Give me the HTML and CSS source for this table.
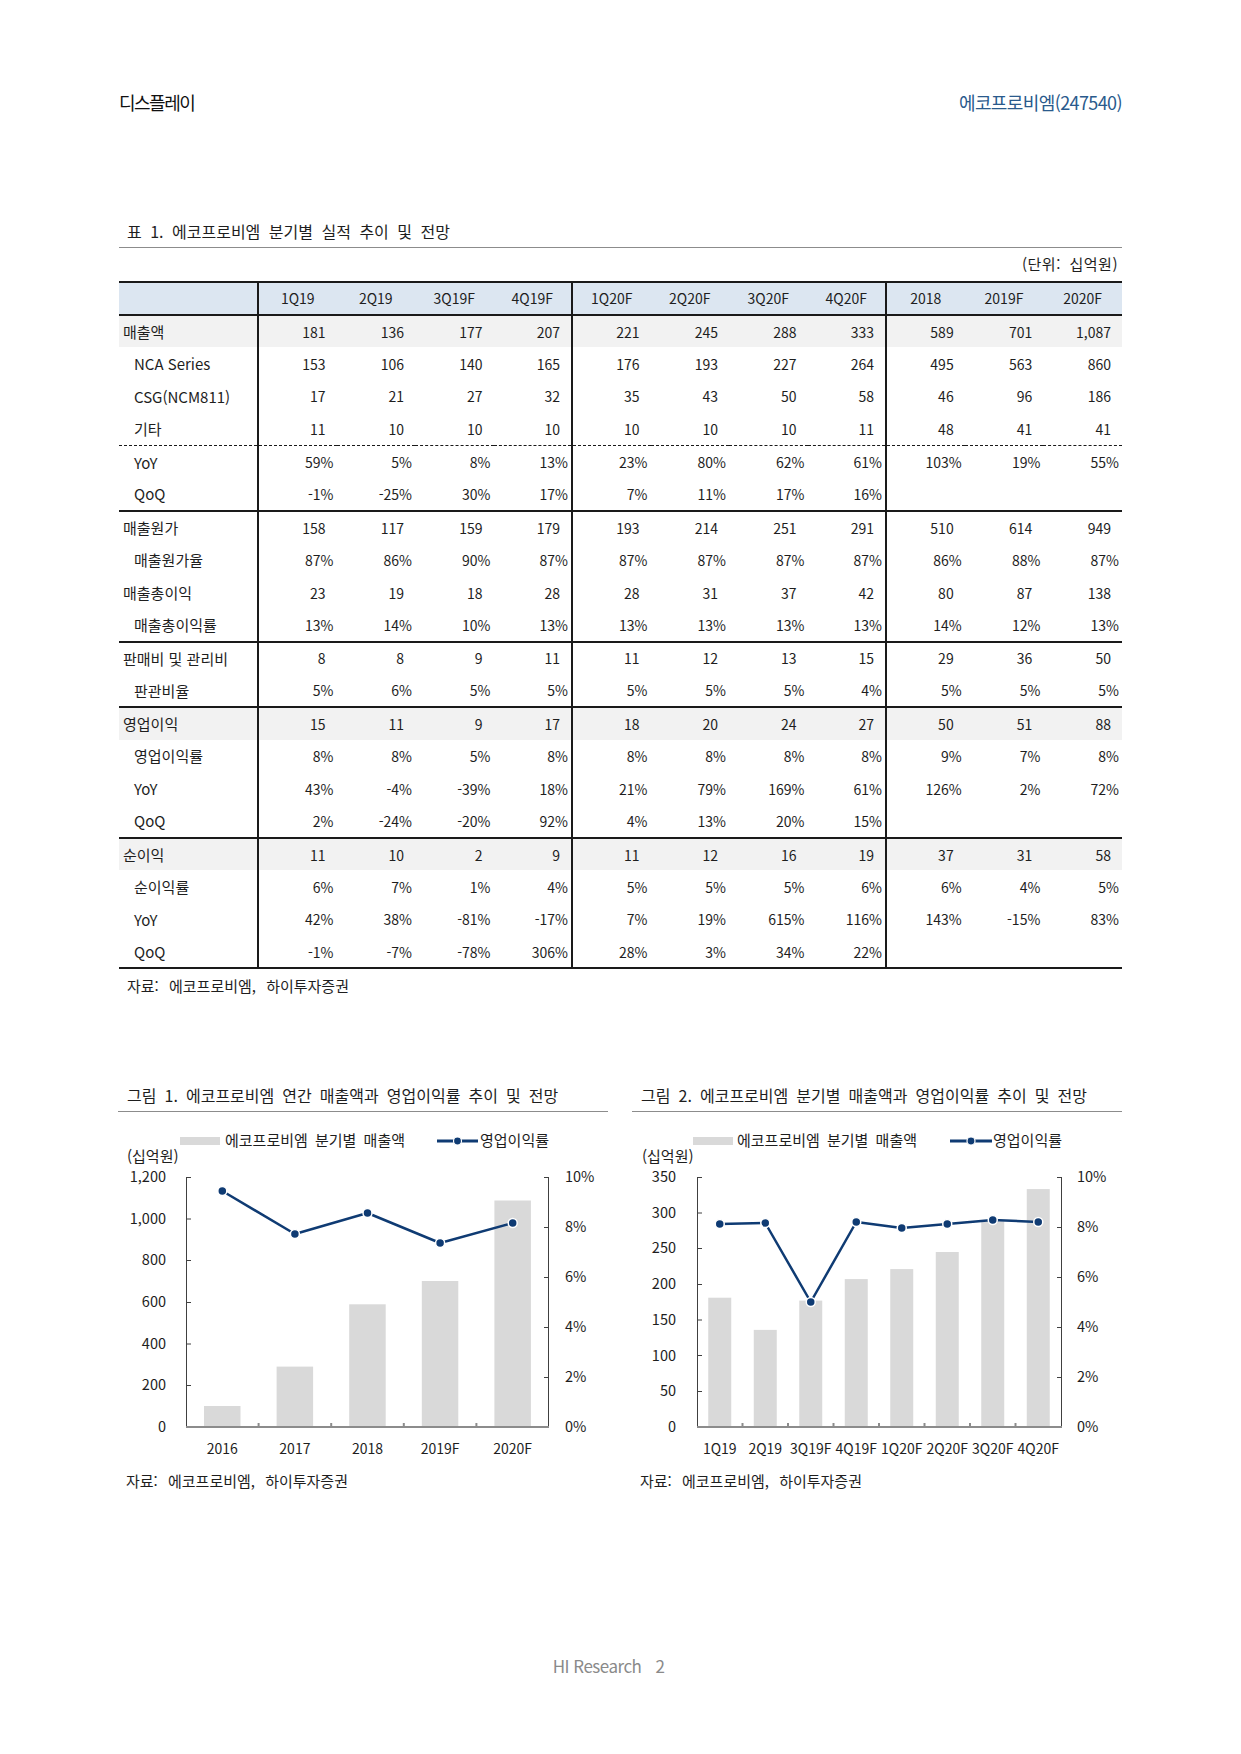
FILE: index.html
```html
<!DOCTYPE html>
<html lang="ko">
<head>
<meta charset="utf-8">
<title>에코프로비엠</title>
<link rel="stylesheet" href="styles.css">
</head>
<body>
<div class="page">
  <header class="top">
    <span class="sector">디스플레이</span>
    <span class="company">에코프로비엠(247540)</span>
  </header>

  <section class="tbl-block">
    <div class="caption">표 1. 에코프로비엠 분기별 실적 추이 및 전망</div>
    <div class="unit">(단위: 십억원)</div>
    <table class="data">
      <colgroup>
        <col class="c-label">
        <col class="c-q"><col class="c-q"><col class="c-q"><col class="c-q">
        <col class="c-q"><col class="c-q"><col class="c-q"><col class="c-q">
        <col class="c-y"><col class="c-y"><col class="c-y">
      </colgroup>
      <thead>
        <tr class="head">
          <th></th>
          <th>1Q19</th><th>2Q19</th><th>3Q19F</th><th class="sep">4Q19F</th>
          <th>1Q20F</th><th>2Q20F</th><th>3Q20F</th><th class="sep">4Q20F</th>
          <th>2018</th><th>2019F</th><th>2020F</th>
        </tr>
      </thead>
      <tbody>
        <tr class="shade">
          <td class="lbl">매출액</td>
          <td class="n">181</td><td class="n">136</td><td class="n">177</td><td class="n sep">207</td>
          <td class="n">221</td><td class="n">245</td><td class="n">288</td><td class="n sep">333</td>
          <td class="n">589</td><td class="n">701</td><td class="n">1,087</td>
        </tr>
        <tr>
          <td class="lbl sub">NCA Series</td>
          <td class="n">153</td><td class="n">106</td><td class="n">140</td><td class="n sep">165</td>
          <td class="n">176</td><td class="n">193</td><td class="n">227</td><td class="n sep">264</td>
          <td class="n">495</td><td class="n">563</td><td class="n">860</td>
        </tr>
        <tr>
          <td class="lbl sub">CSG(NCM811)</td>
          <td class="n">17</td><td class="n">21</td><td class="n">27</td><td class="n sep">32</td>
          <td class="n">35</td><td class="n">43</td><td class="n">50</td><td class="n sep">58</td>
          <td class="n">46</td><td class="n">96</td><td class="n">186</td>
        </tr>
        <tr class="dash-below">
          <td class="lbl sub">기타</td>
          <td class="n">11</td><td class="n">10</td><td class="n">10</td><td class="n sep">10</td>
          <td class="n">10</td><td class="n">10</td><td class="n">10</td><td class="n sep">11</td>
          <td class="n">48</td><td class="n">41</td><td class="n">41</td>
        </tr>
        <tr>
          <td class="lbl sub">YoY</td>
          <td class="p">59%</td><td class="p">5%</td><td class="p">8%</td><td class="p sep">13%</td>
          <td class="p">23%</td><td class="p">80%</td><td class="p">62%</td><td class="p sep">61%</td>
          <td class="p">103%</td><td class="p">19%</td><td class="p">55%</td>
        </tr>
        <tr class="line-below">
          <td class="lbl sub">QoQ</td>
          <td class="p">-1%</td><td class="p">-25%</td><td class="p">30%</td><td class="p sep">17%</td>
          <td class="p">7%</td><td class="p">11%</td><td class="p">17%</td><td class="p sep">16%</td>
          <td class="p"></td><td class="p"></td><td class="p"></td>
        </tr>
        <tr>
          <td class="lbl">매출원가</td>
          <td class="n">158</td><td class="n">117</td><td class="n">159</td><td class="n sep">179</td>
          <td class="n">193</td><td class="n">214</td><td class="n">251</td><td class="n sep">291</td>
          <td class="n">510</td><td class="n">614</td><td class="n">949</td>
        </tr>
        <tr>
          <td class="lbl sub">매출원가율</td>
          <td class="p">87%</td><td class="p">86%</td><td class="p">90%</td><td class="p sep">87%</td>
          <td class="p">87%</td><td class="p">87%</td><td class="p">87%</td><td class="p sep">87%</td>
          <td class="p">86%</td><td class="p">88%</td><td class="p">87%</td>
        </tr>
        <tr>
          <td class="lbl">매출총이익</td>
          <td class="n">23</td><td class="n">19</td><td class="n">18</td><td class="n sep">28</td>
          <td class="n">28</td><td class="n">31</td><td class="n">37</td><td class="n sep">42</td>
          <td class="n">80</td><td class="n">87</td><td class="n">138</td>
        </tr>
        <tr class="line-below">
          <td class="lbl sub">매출총이익률</td>
          <td class="p">13%</td><td class="p">14%</td><td class="p">10%</td><td class="p sep">13%</td>
          <td class="p">13%</td><td class="p">13%</td><td class="p">13%</td><td class="p sep">13%</td>
          <td class="p">14%</td><td class="p">12%</td><td class="p">13%</td>
        </tr>
        <tr>
          <td class="lbl">판매비 및 관리비</td>
          <td class="n">8</td><td class="n">8</td><td class="n">9</td><td class="n sep">11</td>
          <td class="n">11</td><td class="n">12</td><td class="n">13</td><td class="n sep">15</td>
          <td class="n">29</td><td class="n">36</td><td class="n">50</td>
        </tr>
        <tr class="line-below">
          <td class="lbl sub">판관비율</td>
          <td class="p">5%</td><td class="p">6%</td><td class="p">5%</td><td class="p sep">5%</td>
          <td class="p">5%</td><td class="p">5%</td><td class="p">5%</td><td class="p sep">4%</td>
          <td class="p">5%</td><td class="p">5%</td><td class="p">5%</td>
        </tr>
        <tr class="shade">
          <td class="lbl">영업이익</td>
          <td class="n">15</td><td class="n">11</td><td class="n">9</td><td class="n sep">17</td>
          <td class="n">18</td><td class="n">20</td><td class="n">24</td><td class="n sep">27</td>
          <td class="n">50</td><td class="n">51</td><td class="n">88</td>
        </tr>
        <tr>
          <td class="lbl sub">영업이익률</td>
          <td class="p">8%</td><td class="p">8%</td><td class="p">5%</td><td class="p sep">8%</td>
          <td class="p">8%</td><td class="p">8%</td><td class="p">8%</td><td class="p sep">8%</td>
          <td class="p">9%</td><td class="p">7%</td><td class="p">8%</td>
        </tr>
        <tr>
          <td class="lbl sub">YoY</td>
          <td class="p">43%</td><td class="p">-4%</td><td class="p">-39%</td><td class="p sep">18%</td>
          <td class="p">21%</td><td class="p">79%</td><td class="p">169%</td><td class="p sep">61%</td>
          <td class="p">126%</td><td class="p">2%</td><td class="p">72%</td>
        </tr>
        <tr class="line-below">
          <td class="lbl sub">QoQ</td>
          <td class="p">2%</td><td class="p">-24%</td><td class="p">-20%</td><td class="p sep">92%</td>
          <td class="p">4%</td><td class="p">13%</td><td class="p">20%</td><td class="p sep">15%</td>
          <td class="p"></td><td class="p"></td><td class="p"></td>
        </tr>
        <tr class="shade">
          <td class="lbl">순이익</td>
          <td class="n">11</td><td class="n">10</td><td class="n">2</td><td class="n sep">9</td>
          <td class="n">11</td><td class="n">12</td><td class="n">16</td><td class="n sep">19</td>
          <td class="n">37</td><td class="n">31</td><td class="n">58</td>
        </tr>
        <tr>
          <td class="lbl sub">순이익률</td>
          <td class="p">6%</td><td class="p">7%</td><td class="p">1%</td><td class="p sep">4%</td>
          <td class="p">5%</td><td class="p">5%</td><td class="p">5%</td><td class="p sep">6%</td>
          <td class="p">6%</td><td class="p">4%</td><td class="p">5%</td>
        </tr>
        <tr>
          <td class="lbl sub">YoY</td>
          <td class="p">42%</td><td class="p">38%</td><td class="p">-81%</td><td class="p sep">-17%</td>
          <td class="p">7%</td><td class="p">19%</td><td class="p">615%</td><td class="p sep">116%</td>
          <td class="p">143%</td><td class="p">-15%</td><td class="p">83%</td>
        </tr>
        <tr class="last">
          <td class="lbl sub">QoQ</td>
          <td class="p">-1%</td><td class="p">-7%</td><td class="p">-78%</td><td class="p sep">306%</td>
          <td class="p">28%</td><td class="p">3%</td><td class="p">34%</td><td class="p sep">22%</td>
          <td class="p"></td><td class="p"></td><td class="p"></td>
        </tr>
      </tbody>
    </table>
    <div class="source">자료: 에코프로비엠, 하이투자증권</div>
  </section>

  <section class="charts">
    <div class="chart">
      <div class="caption">그림 1. 에코프로비엠 연간 매출액과 영업이익률 추이 및 전망</div>
      <svg class="plot" width="490" height="352" viewBox="0 0 490 352">
        <rect x="62" y="24" width="40" height="8" fill="#d9d9d9"/>
        <text x="107" y="33" class="lg">에코프로비엠 분기별 매출액</text>
        <line x1="319" y1="28" x2="360" y2="28" stroke="#0f3b73" stroke-width="3"/>
        <circle cx="339.5" cy="28" r="4" fill="#0f3b73" stroke="#fff" stroke-width="1.2"/>
        <text x="362" y="33" class="lg">영업이익률</text>
        <text x="9" y="49" class="lg">(십억원)</text>

        <g class="bars" fill="#d9d9d9">
          <rect x="86" y="293" width="36.5" height="21"/>
          <rect x="158.6" y="253.6" width="36.5" height="60.4"/>
          <rect x="231.2" y="191.3" width="36.5" height="122.7"/>
          <rect x="303.8" y="168" width="36.5" height="146"/>
          <rect x="376.4" y="87.5" width="36.5" height="226.5"/>
        </g>

        <g class="axis">
          <line x1="68.5" y1="64" x2="68.5" y2="314"/>
          <line x1="430.5" y1="64" x2="430.5" y2="314"/>
          <line x1="68" y1="64.5" x2="73" y2="64.5"/>
          <line x1="68" y1="106" x2="73" y2="106"/>
          <line x1="68" y1="147.5" x2="73" y2="147.5"/>
          <line x1="68" y1="189.5" x2="73" y2="189.5"/>
          <line x1="68" y1="231" x2="73" y2="231"/>
          <line x1="68" y1="272.5" x2="73" y2="272.5"/>
          <line x1="426" y1="64.5" x2="431" y2="64.5"/>
          <line x1="426" y1="114.5" x2="431" y2="114.5"/>
          <line x1="426" y1="164.5" x2="431" y2="164.5"/>
          <line x1="426" y1="214.5" x2="431" y2="214.5"/>
          <line x1="426" y1="264.5" x2="431" y2="264.5"/>
        </g>
        <g class="xaxis">
          <line x1="68" y1="314" x2="431" y2="314"/>
          <line x1="140.6" y1="310" x2="140.6" y2="314"/>
          <line x1="213.2" y1="310" x2="213.2" y2="314"/>
          <line x1="285.8" y1="310" x2="285.8" y2="314"/>
          <line x1="358.4" y1="310" x2="358.4" y2="314"/>
        </g>

        <g class="yl" text-anchor="end">
          <text x="48" y="69">1,200</text>
          <text x="48" y="111">1,000</text>
          <text x="48" y="152">800</text>
          <text x="48" y="194">600</text>
          <text x="48" y="236">400</text>
          <text x="48" y="277">200</text>
          <text x="48" y="319">0</text>
        </g>
        <g class="yl">
          <text x="447" y="69">10%</text>
          <text x="447" y="119">8%</text>
          <text x="447" y="169">6%</text>
          <text x="447" y="219">4%</text>
          <text x="447" y="269">2%</text>
          <text x="447" y="319">0%</text>
        </g>
        <g class="xl" text-anchor="middle">
          <text x="104.3" y="341">2016</text>
          <text x="176.9" y="341">2017</text>
          <text x="249.5" y="341">2018</text>
          <text x="322.1" y="341">2019F</text>
          <text x="394.7" y="341">2020F</text>
        </g>

        <polyline points="104.3,78 176.9,121 249.5,100 322.1,130 394.7,110" fill="none" stroke="#0f3b73" stroke-width="2.5" stroke-linejoin="round"/>
        <g fill="#0f3b73" stroke="#fff" stroke-width="1.5">
          <circle cx="104.3" cy="78" r="4.5"/>
          <circle cx="176.9" cy="121" r="4.5"/>
          <circle cx="249.5" cy="100" r="4.5"/>
          <circle cx="322.1" cy="130" r="4.5"/>
          <circle cx="394.7" cy="110" r="4.5"/>
        </g>
      </svg>
      <div class="source">자료: 에코프로비엠, 하이투자증권</div>
    </div>

    <div class="chart">
      <div class="caption">그림 2. 에코프로비엠 분기별 매출액과 영업이익률 추이 및 전망</div>
      <svg class="plot" width="490" height="352" viewBox="0 0 490 352">
        <rect x="61" y="24" width="40" height="8" fill="#d9d9d9"/>
        <text x="105" y="33" class="lg">에코프로비엠 분기별 매출액</text>
        <line x1="318" y1="28" x2="360" y2="28" stroke="#0f3b73" stroke-width="3"/>
        <circle cx="339" cy="28" r="4" fill="#0f3b73" stroke="#fff" stroke-width="1.2"/>
        <text x="361" y="33" class="lg">영업이익률</text>
        <text x="10" y="49" class="lg">(십억원)</text>

        <g class="bars" fill="#d9d9d9">
          <rect x="76.25" y="184.7" width="23" height="129.3"/>
          <rect x="121.75" y="216.9" width="23" height="97.1"/>
          <rect x="167.25" y="187.6" width="23" height="126.4"/>
          <rect x="212.75" y="166.1" width="23" height="147.9"/>
          <rect x="258.25" y="156.1" width="23" height="157.9"/>
          <rect x="303.75" y="139" width="23" height="175"/>
          <rect x="349.25" y="108.3" width="23" height="205.7"/>
          <rect x="394.75" y="76.1" width="23" height="237.9"/>
        </g>

        <g class="axis">
          <line x1="65.5" y1="64" x2="65.5" y2="314"/>
          <line x1="429.5" y1="64" x2="429.5" y2="314"/>
          <line x1="65" y1="64.5" x2="70" y2="64.5"/>
          <line x1="65" y1="100" x2="70" y2="100"/>
          <line x1="65" y1="135.5" x2="70" y2="135.5"/>
          <line x1="65" y1="171.5" x2="70" y2="171.5"/>
          <line x1="65" y1="207" x2="70" y2="207"/>
          <line x1="65" y1="242.5" x2="70" y2="242.5"/>
          <line x1="65" y1="278.5" x2="70" y2="278.5"/>
          <line x1="425" y1="64.5" x2="430" y2="64.5"/>
          <line x1="425" y1="114.5" x2="430" y2="114.5"/>
          <line x1="425" y1="164.5" x2="430" y2="164.5"/>
          <line x1="425" y1="214.5" x2="430" y2="214.5"/>
          <line x1="425" y1="264.5" x2="430" y2="264.5"/>
        </g>
        <g class="xaxis">
          <line x1="65" y1="314" x2="430" y2="314"/>
          <line x1="110.5" y1="310" x2="110.5" y2="314"/>
          <line x1="156" y1="310" x2="156" y2="314"/>
          <line x1="201.5" y1="310" x2="201.5" y2="314"/>
          <line x1="247" y1="310" x2="247" y2="314"/>
          <line x1="292.5" y1="310" x2="292.5" y2="314"/>
          <line x1="338" y1="310" x2="338" y2="314"/>
          <line x1="383.5" y1="310" x2="383.5" y2="314"/>
        </g>

        <g class="yl" text-anchor="end">
          <text x="44" y="69">350</text>
          <text x="44" y="105">300</text>
          <text x="44" y="140">250</text>
          <text x="44" y="176">200</text>
          <text x="44" y="212">150</text>
          <text x="44" y="248">100</text>
          <text x="44" y="283">50</text>
          <text x="44" y="319">0</text>
        </g>
        <g class="yl">
          <text x="445" y="69">10%</text>
          <text x="445" y="119">8%</text>
          <text x="445" y="169">6%</text>
          <text x="445" y="219">4%</text>
          <text x="445" y="269">2%</text>
          <text x="445" y="319">0%</text>
        </g>
        <g class="xl" text-anchor="middle">
          <text x="87.75" y="341">1Q19</text>
          <text x="133.25" y="341">2Q19</text>
          <text x="178.75" y="341">3Q19F</text>
          <text x="224.25" y="341">4Q19F</text>
          <text x="269.75" y="341">1Q20F</text>
          <text x="315.25" y="341">2Q20F</text>
          <text x="360.75" y="341">3Q20F</text>
          <text x="406.25" y="341">4Q20F</text>
        </g>

        <polyline points="87.75,111 133.25,110 178.75,189 224.25,109 269.75,115 315.25,111 360.75,107 406.25,109" fill="none" stroke="#0f3b73" stroke-width="2.5" stroke-linejoin="round"/>
        <g fill="#0f3b73" stroke="#fff" stroke-width="1.5">
          <circle cx="87.75" cy="111" r="4.5"/>
          <circle cx="133.25" cy="110" r="4.5"/>
          <circle cx="178.75" cy="189" r="4.5"/>
          <circle cx="224.25" cy="109" r="4.5"/>
          <circle cx="269.75" cy="115" r="4.5"/>
          <circle cx="315.25" cy="111" r="4.5"/>
          <circle cx="360.75" cy="107" r="4.5"/>
          <circle cx="406.25" cy="109" r="4.5"/>
        </g>
      </svg>
      <div class="source">자료: 에코프로비엠, 하이투자증권</div>
    </div>
  </section>

  <footer class="foot">
    <span class="brand">HI Research</span><span class="pno">2</span>
  </footer>
</div>
</body>
</html>
```

FILE: styles.css
```css
* { box-sizing: border-box; }

html, body {
  margin: 0;
  padding: 0;
  background: #fff;
}

body {
  font-family: "Noto Sans CJK KR", "Noto Sans", "Liberation Sans", sans-serif;
  color: #1e1e1e;
}

.page {
  width: 1241px;
  height: 1754px;
  padding: 90px 119px 0 119px;
  display: flex;
  flex-direction: column;
}

/* header */
.top {
  display: flex;
  justify-content: space-between;
  align-items: center;
  height: 24px;
  font-size: 18px;
  line-height: 24px;
}
.sector { color: #111; letter-spacing: -1.5px; }
.company { color: #2a5a8c; letter-spacing: -0.6px; }

/* table block */
.tbl-block {
  margin-top: 106px;
}

.caption {
  font-size: 16px;
  line-height: 22px;
  padding: 0 0 5px 8px;
  border-bottom: 1px solid #8c8c8c;
  word-spacing: 4px;
  color: #1e1e1e;
}

.unit {
  height: 33px;
  line-height: 31px;
  text-align: right;
  font-size: 15px;
  padding-right: 4px;
  letter-spacing: 0.5px;
  word-spacing: 4px;
}

.data {
  width: 1003px;
  border-collapse: collapse;
  table-layout: fixed;
  font-size: 14px;
}

.c-label { width: 139px; }
.c-q { width: 78.5px; }
.c-y { width: 78.67px; }

.data tr { height: 32.7px; }

.data th, .data td {
  padding: 0;
  white-space: nowrap;
  vertical-align: middle;
}

.data th:first-child, .data td:first-child {
  border-right: 2px solid #1a1a1a;
}
.data .sep {
  border-right: 2px solid #1a1a1a;
}

.head th {
  background: #dce6f1;
  font-weight: normal;
  text-align: center;
  border-top: 2px solid #1a1a1a;
  border-bottom: 2px solid #1a1a1a;
  font-size: 14px;
}

.shade td { background: #f2f2f2; }

.lbl {
  text-align: left;
  font-size: 15px;
  padding-left: 4px !important;
}
.lbl.sub { padding-left: 15px !important; }

.n { text-align: right; padding-right: 11px !important; }
.p { text-align: right; padding-right: 3px !important; }

.dash-below td { border-bottom: 1px dashed #1a1a1a; }
.line-below td { border-bottom: 2px solid #1a1a1a; }
.last td { border-bottom: 2px solid #1a1a1a; }

.source {
  font-size: 15px;
  line-height: 20px;
  padding-left: 8px;
  margin-top: 7px;
  word-spacing: 6px;
}

/* charts */
.charts {
  margin-top: 88px;
  display: flex;
  gap: 24px;
  margin-left: -1px;
}

.chart {
  width: 490px;
  display: flex;
  flex-direction: column;
}

.chart .caption {
  padding-left: 9px;
  word-spacing: 3.6px;
}

.plot {
  display: block;
  font-family: "Noto Sans CJK KR", "Noto Sans", sans-serif;
  margin-top: 1px;
}

.plot .lg { font-size: 15px; fill: #1e1e1e; word-spacing: 3px; }
.plot .yl text { font-size: 14.5px; fill: #1e1e1e; }
.plot .xl text { font-size: 14px; fill: #1e1e1e; }
.plot .axis line { stroke: #404040; stroke-width: 1; }
.plot .xaxis line { stroke: #8c8c8c; stroke-width: 2; }

.chart .source {
  margin-top: 6px;
}

/* footer */
.foot {
  margin-top: auto;
  margin-bottom: 76px;
  padding-right: 24px;
  text-align: center;
  font-size: 17px;
  color: #8a8a8a;
  letter-spacing: -0.5px;
}
.foot .pno { margin-left: 14px; }
```
